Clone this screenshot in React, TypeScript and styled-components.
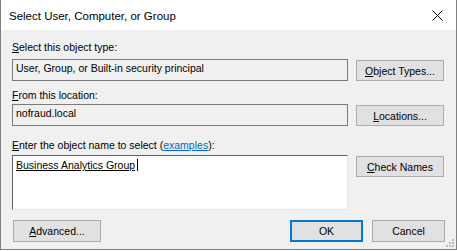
import React from 'react'
import styled, { createGlobalStyle } from 'styled-components'

const GlobalStyle = createGlobalStyle`
  html, body {
    margin: 0;
    padding: 0;
    background: #ffffff;
  }
  * {
    box-sizing: border-box;
  }
`

const Window = styled.div`
  width: 457px;
  height: 250px;
  display: flex;
  flex-direction: column;
  border: 1px solid #808080;
  border-top: none;
  background: #f0f0f0;
  position: relative;
  font-family: "Liberation Sans", Arial, sans-serif;
  font-size: 10.5px;
  color: #000;
`

const TitleBar = styled.div`
  height: 30px;
  flex: none;
  display: flex;
  align-items: center;
  justify-content: space-between;
  background: #ffffff;
  padding-left: 8px;
`

const Title = styled.span`
  font-size: 11.5px;
  margin-top: 2px;
`

const CloseButton = styled.div`
  width: 30px;
  height: 30px;
  display: flex;
  align-items: center;
  justify-content: center;
  margin-right: 4px;
`

const Body = styled.div`
  flex: 1;
  display: flex;
  flex-direction: column;
  padding: 11px 11px 7px 11px;
`

const Label = styled.div<{ $top?: number; $gap: number }>`
  line-height: 13px;
  height: 13px;
  margin-top: ${p => p.$top ?? 0}px;
  margin-bottom: ${p => p.$gap}px;
  white-space: nowrap;
`

const Row = styled.div`
  display: flex;
  align-items: flex-start;
  gap: 8px;
`

const ReadOnlyBox = styled.div`
  width: 336px;
  height: 22px;
  border: 1px solid #7a7a7a;
  background: #f0f0f0;
  padding: 2px 3px 0;
  line-height: 13px;
  white-space: nowrap;
`

const EditBox = styled.div`
  width: 336px;
  height: 55px;
  background: #ffffff;
  border-top: 1px solid #646464;
  border-left: 1px solid #646464;
  border-right: 1px solid #e3e3e3;
  border-bottom: 1px solid #e3e3e3;
  padding: 3px 3px 0;
  line-height: 13px;
  white-space: nowrap;
`

const Resolved = styled.span`
  text-decoration: underline;
`

const Caret = styled.span`
  display: inline-block;
  width: 1px;
  height: 12px;
  background: #000;
  margin-left: 2px;
  vertical-align: -2px;
`

const Button = styled.div<{ $width?: number; $default?: boolean }>`
  width: ${p => p.$width ?? 88}px;
  height: 22px;
  flex: none;
  display: flex;
  align-items: center;
  justify-content: center;
  background: #e1e1e1;
  border: ${p => (p.$default ? '2px solid #0078d7' : '1px solid #adadad')};
  white-space: nowrap;
`

const SideButton = styled(Button)`
  height: 21px;
  margin-top: 1px;
`

const Footer = styled.div`
  display: flex;
  align-items: center;
  margin-top: 10px;
  padding-left: 1px;
`

const Spacer = styled.div`
  flex: 1;
`

const FooterGap = styled.div`
  width: 9px;
`

const Key = styled.u`
  text-decoration: underline;
`

const Link = styled.span`
  color: #0066cc;
  text-decoration: underline;
`

const Grip = styled.svg`
  position: absolute;
  right: 1px;
  bottom: 1px;
`

const App: React.FC = () => {
  return (
    <>
      <GlobalStyle />
      <Window>
        <TitleBar>
          <Title>Select User, Computer, or Group</Title>
          <CloseButton>
            <svg width="11" height="11" viewBox="0 0 11 11">
              <path d="M0.5 0.5 L10.5 10.5 M10.5 0.5 L0.5 10.5" stroke="#000" strokeWidth="1" />
            </svg>
          </CloseButton>
        </TitleBar>
        <Body>
          <Label $gap={5}>
            <Key>S</Key>elect this object type:
          </Label>
          <Row>
            <ReadOnlyBox>User, Group, or Built-in security principal</ReadOnlyBox>
            <SideButton>
              <span>
                <Key>O</Key>bject Types...
              </span>
            </SideButton>
          </Row>

          <Label $top={8} $gap={2}>
            <Key>F</Key>rom this location:
          </Label>
          <Row>
            <ReadOnlyBox>nofraud.local</ReadOnlyBox>
            <SideButton>
              <span>
                <Key>L</Key>ocations...
              </span>
            </SideButton>
          </Row>

          <Label $top={13} $gap={3}>
            <Key>E</Key>nter the object name to select (<Link>examples</Link>):
          </Label>
          <Row>
            <EditBox>
              <Resolved>Business Analytics Group</Resolved>
              <Caret />
            </EditBox>
            <SideButton>
              <span>
                <Key>C</Key>heck Names
              </span>
            </SideButton>
          </Row>

          <Footer>
            <Button>
              <span>
                <Key>A</Key>dvanced...
              </span>
            </Button>
            <Spacer />
            <Button $width={73} $default>
              OK
            </Button>
            <FooterGap />
            <Button $width={73}>Cancel</Button>
          </Footer>
        </Body>
        <Grip width="9" height="9" viewBox="0 0 9 9">
          <g fill="#bcbcbc">
            <rect x="6" y="0" width="2" height="2" />
            <rect x="3" y="3" width="2" height="2" />
            <rect x="6" y="3" width="2" height="2" />
            <rect x="0" y="6" width="2" height="2" />
            <rect x="3" y="6" width="2" height="2" />
            <rect x="6" y="6" width="2" height="2" />
          </g>
        </Grip>
      </Window>
    </>
  )
}

export default App
